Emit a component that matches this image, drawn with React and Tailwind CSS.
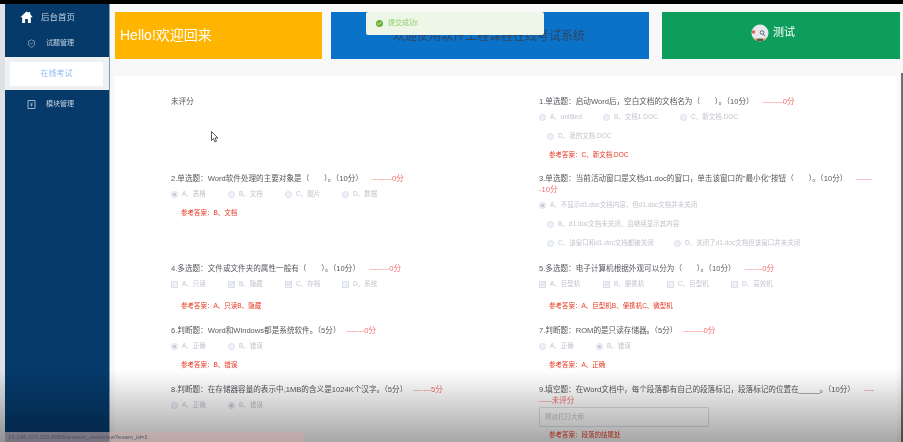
import { ShieldCheck, Check } from 'lucide-react';

const font = { fontFamily: '"Liberation Sans", "Noto Sans CJK SC", sans-serif' };

function Radio({ on }) {
    return (
        <span className="w-[7px] h-[7px] rounded-full border border-[#dcdfe6] bg-[#edf2fc] flex items-center justify-center shrink-0">
            {on && <span className="w-[3px] h-[3px] rounded-full bg-[#c0c4cc]" />}
        </span>
    );
}

function Box({ on }) {
    return (
        <span className="w-[7px] h-[7px] border border-[#dcdfe6] bg-[#edf2fc] flex items-center justify-center shrink-0">
            {on && <Check className="w-[6px] h-[6px] text-[#b4b8c0] shrink-0" strokeWidth={2} />}
        </span>
    );
}

// a row of options; each item is [label, checked, width]
function Options({ type = 'radio', items, className = '' }) {
    const Mark = type === 'radio' ? Radio : Box;
    return (
        <div className={`flex items-center h-[12px] text-[6.5px] text-[#c0c4cc] ${className}`}>
            {items.map(([label, on, w]) => (
                <div key={label} className="flex items-center gap-[3px] shrink-0" style={{ width: w }}>
                    <Mark on={on} />
                    <span className="ml-[1px] whitespace-nowrap">{label}</span>
                </div>
            ))}
        </div>
    );
}

function Title({ text, score, gap = 'ml-[9px]' }) {
    return (
        <div className="text-[7.6px] leading-[13px] text-[#55575c] whitespace-pre">
            {text}
            <span className={`${gap} text-[#f56c6c]`}>{score}</span>
        </div>
    );
}

// same as Title, for a question that runs over two lines
function LongTitle({ text, score }) {
    return (
        <div className="w-[336px] pt-[1px] text-[7.6px] leading-[11px] text-[#55575c] whitespace-pre-wrap">
            {text}
            <span className="ml-[9px] text-[#f56c6c]">{score}</span>
        </div>
    );
}

function Answer({ children, className = 'mt-[7px]' }) {
    return <div className={`text-[6.5px] leading-[12px] text-[#e8351f] ml-[10px] ${className}`}>{children}</div>;
}

function Banner({ className, children }) {
    return <div className={`h-[47px] flex items-center ${className}`}>{children}</div>;
}

function HomeGlyph() {
    return (
        <svg viewBox="0 0 14 13" className="w-[13px] h-[12px] mr-[8px] shrink-0">
            <path d="M7 .5.3 6.800h2V13h3.200V8.700h3V13h3.200V6.800h2L11 3.300V1H9.500v.9z" fill="white" />
        </svg>
    );
}

function ModuleGlyph() {
    return (
        <svg viewBox="0 0 9 9" className="w-[9px] h-[9px] mr-[10px] shrink-0" fill="none" stroke="currentColor" strokeWidth=".8">
            <path d="M1 .5h7v8H1z" />
            <path d="M3.200 2.500l1.300 1.500 1.300-1.500M4.500 4v2.500M3.200 5h2.600" strokeWidth=".6" />
        </svg>
    );
}

function TestBadge() {
    return (
        <svg viewBox="0 0 18 18" className="w-[18px] h-[18px]">
            <circle cx="9" cy="9" r="8.500" fill="#e6e8ee" />
            <path d="M2.500 14.500a8.500 8.500 0 0 0 13 0z" fill="#e0a83a" />
            <path d="M6 16.800a8.500 8.500 0 0 0 6 0v-2H6z" fill="#4a5570" />
            <circle cx="2.500" cy="8" r="1.800" fill="#e8604c" />
            <circle cx="11" cy="8.500" r="1.800" fill="none" stroke="#59606e" strokeWidth=".9" />
            <path d="M12.300 10l1.700 2.200" stroke="#59606e" strokeWidth=".9" />
        </svg>
    );
}

export default function App() {
    return (
        <div className="relative w-[903px] h-[442px] overflow-hidden bg-[#f8f8f9] flex flex-col blur-[0.35px]" style={font}>
            <div className="h-1 bg-black shrink-0" />
            <div className="flex flex-1 min-h-0">
                <div className="w-[5px] bg-[#dfe1e4] shrink-0" />
                {/* sidebar */}
                <aside className="w-[105px] bg-[#053a6b] shrink-0 border-r border-[#7f9cbc] text-[#c5d3e2]">
                    <div className="h-[26px] flex items-center pl-[15px] text-[8.5px]">
                        <HomeGlyph />
                        后台首页
                    </div>
                    <div className="h-[27px] flex items-center pl-[22px] text-[7px]">
                        <ShieldCheck className="w-[9px] h-[9px] mr-[10px]" strokeWidth={1.5} />
                        试题管理
                    </div>
                    <div className="h-[33px] bg-[#eef1f4] pl-[5px] pr-[6px] pt-[5px] pb-[4px]">
                        <div className="h-full bg-white flex items-center justify-center text-[8px] text-[#8cbcf0]">在线考试</div>
                    </div>
                    <div className="h-[28px] flex items-center pl-[22px] text-[7px]">
                        <ModuleGlyph />
                        模块管理
                    </div>
                </aside>

                {/* main */}
                <main className="flex-1 min-w-0 pl-[5px]">
                    <div className="flex mt-[8px]">
                        <Banner className="w-[207px] bg-[#ffb400] pl-[5px] text-[14px] text-white">Hello!欢迎回来</Banner>
                        <Banner className="w-[318px] ml-[9px] bg-[#0b72c9] pl-[62px] text-[12px] text-[#33445c]">欢迎使用软件工程课程在线考试系统</Banner>
                        <Banner className="w-[238px] ml-[13px] bg-[#0e9e5b] justify-center pr-[16px] pb-[6px] text-[11px] text-white gap-[4px]">
                            <TestBadge />
                            测试
                        </Banner>
                    </div>

                    <div className="mt-[17px] w-[782px] h-[366px] bg-white grid grid-cols-[368px_1fr] grid-rows-[77px_90px_62px_59px_1fr] pl-[56px] pt-[19px]">
                        <div className="text-[7.6px] leading-[13px] text-[#55575c]">未评分</div>
                        <div>
                            <Title text="1.单选题：启动Word后，空白文档的文档名为（       ）。（10分）" score="--------0分" />
                            <Options className="mt-[3px]" items={[['A、untitled', false, 64], ['B、文档1.DOC', false, 77], ['C、新文档.DOC', false, 90]]} />
                            <Options className="mt-[7px] ml-[8px]" items={[['D、我的文档.DOC', false, 90]]} />
                            <Answer>参考答案：C、新文档.DOC</Answer>
                        </div>

                        <div>
                            <Title text="2.单选题：Word软件处理的主要对象是（       ）。（10分）" score="--------0分" />
                            <Options className="mt-[3px]" items={[['A、表格', true, 57], ['B、文档', false, 57], ['C、图片', false, 57], ['D、数据', false, 57]]} />
                            <Answer>参考答案：B、文档</Answer>
                        </div>
                        <div>
                            <LongTitle text={'3.单选题：当前活动窗口是文档d1.doc的窗口，单击该窗口的"最小化"按钮（       ）。（10分）'} score="-------10分" />
                            <Options className="mt-[4px]" items={[['A、不显示d1.doc文档内容，但d1.doc文档并未关闭', true, 200]]} />
                            <Options className="mt-[7px] ml-[8px]" items={[['B、d1.doc文档未关闭，且继续显示其内容', false, 200]]} />
                            <Options className="mt-[7px] ml-[8px]" items={[['C、该窗口和d1.doc文档都被关闭', false, 127], ['D、关闭了d1.doc文档但该窗口并未关闭', false, 180]]} />
                        </div>

                        <div>
                            <Title text="4.多选题：文件或文件夹的属性一般有（       ）。（10分）" score="--------0分" />
                            <Options type="box" className="mt-[3px]" items={[['A、只读', false, 57], ['B、隐藏', true, 57], ['C、存档', true, 57], ['D、系统', false, 57]]} />
                            <Answer className="mt-[10px]">参考答案：A、只读B、隐藏</Answer>
                        </div>
                        <div>
                            <Title text="5.多选题：电子计算机根据外观可以分为（       ）。（10分）" score="-------0分" />
                            <Options type="box" className="mt-[3px]" items={[['A、巨型机', true, 64], ['B、便携机', true, 64], ['C、巨型机', false, 64], ['D、高效机', false, 64]]} />
                            <Answer className="mt-[10px]">参考答案：A、巨型机B、便携机C、微型机</Answer>
                        </div>

                        <div>
                            <Title text="6.判断题：Word和Windows都是系统软件。（5分）" score="-------0分" gap="ml-[6px]" />
                            <Options className="mt-[3px]" items={[['A、正确', true, 57], ['B、错误', false, 57]]} />
                            <Answer>参考答案：B、错误</Answer>
                        </div>
                        <div>
                            <Title text="7.判断题：ROM的是只读存储器。（5分）" score="--------0分" gap="ml-[6px]" />
                            <Options className="mt-[3px]" items={[['A、正确', false, 57], ['B、错误', true, 57]]} />
                            <Answer>参考答案：A、正确</Answer>
                        </div>

                        <div>
                            <Title text="8.判断题：在存储器容量的表示中,1MB的含义是1024K个汉字。（5分）" score="-------5分" gap="ml-[6px]" />
                            <Options className="mt-[3px]" items={[['A、正确', false, 57], ['B、错误', true, 57]]} />
                        </div>
                        <div>
                            <LongTitle text="9.填空题：在Word文档中，每个段落都有自己的段落标记，段落标记的位置在_____。（10分）" score="---------未评分" />
                            <div className="mt-[1px] w-[170px] h-[20px] border border-[#dcdfe6] rounded-[1px] flex items-center pl-[5px] text-[6.5px] text-[#c0c4cc]">啊对打打大师</div>
                            <Answer className="mt-[2px]">参考答案：段落的结尾处</Answer>
                        </div>
                    </div>
                </main>
            </div>

            {/* page scrollbar */}
            <div className="absolute right-0 top-[73px] w-[2px] h-[369px] bg-[#6f7073]" />

            {/* toast */}
            <div className="absolute left-[366px] top-[12px] w-[178px] h-[23px] bg-[#eef6e8] rounded-[2px] flex items-center pl-[10px] text-[7px] text-[#8fd06a]">
                <span className="w-[7px] h-[7px] mr-[5px] rounded-full bg-[#67b033] flex items-center justify-center">
                    <Check className="w-[5px] h-[5px] text-white" strokeWidth={4} />
                </span>
                提交成功!
            </div>

            {/* mouse cursor */}
            <svg viewBox="0 0 8 12" className="absolute left-[211px] top-[131px] w-[8px] h-[12px]">
                <path d="M.5.5v9l2-2 1.500 3.500 1.500-.7L4 7h3z" fill="white" stroke="#333" strokeWidth=".8" />
            </svg>

            {/* player shade and link preview */}
            <div className="absolute inset-x-0 bottom-0 h-[72px] bg-gradient-to-b from-transparent to-black/35 pointer-events-none" />
            <div className="absolute left-[5px] bottom-0 w-[299px] h-[10px] bg-[#c9a8a8]/60 text-[6px] leading-[10px] pl-[3px] text-[#4a5568]">
                19.168.103.203:8088/answer_view/view?exam_id=1
            </div>
        </div>
    );
}
